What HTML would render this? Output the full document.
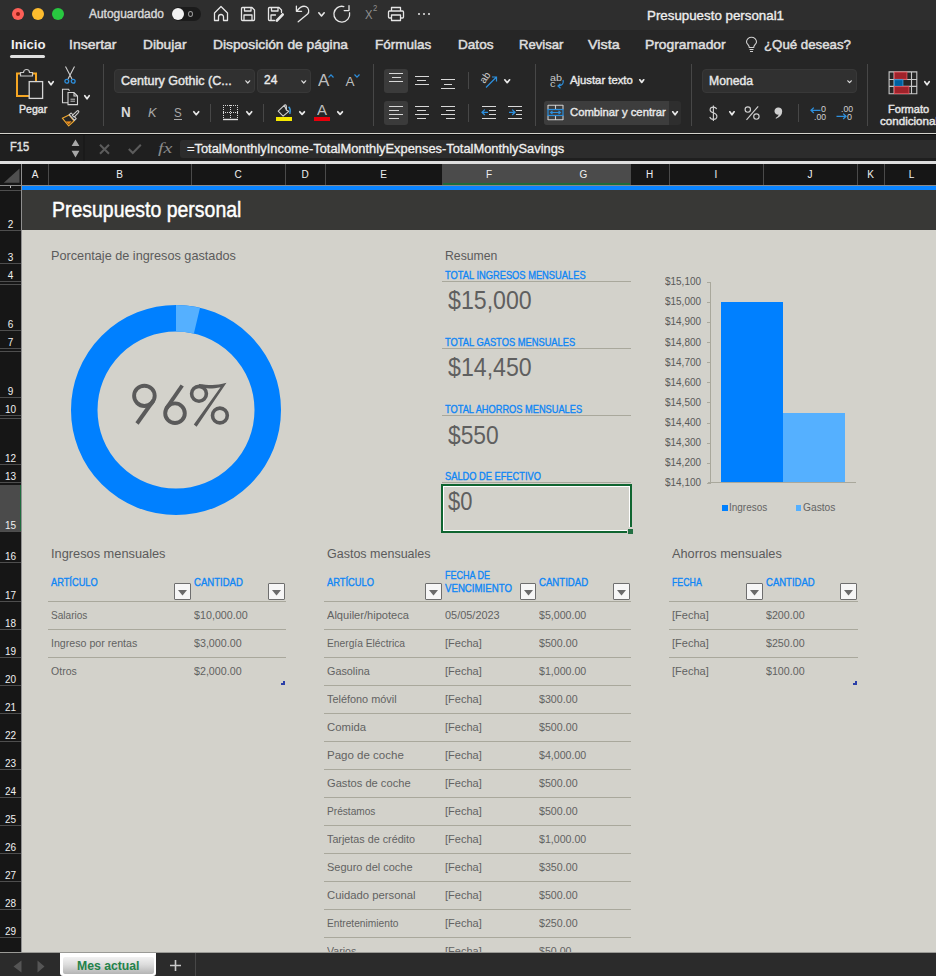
<!DOCTYPE html>
<html><head><meta charset="utf-8">
<style>
*{margin:0;padding:0;box-sizing:border-box}
html,body{width:936px;height:976px;overflow:hidden;background:#d3d2cb;font-family:"Liberation Sans",sans-serif;position:relative}
.a{position:absolute}
.t{position:absolute;white-space:nowrap;line-height:1;transform-origin:0 0}
svg{position:absolute;overflow:visible}
</style></head><body>
<div class="a" style="left:0px;top:0px;width:936px;height:30px;background:#2e2e2e;"></div>
<div class="a" style="left:0px;top:30px;width:936px;height:103px;background:#262626;"></div>
<div class="a" style="left:0px;top:133.5px;width:936px;height:1.5px;background:#0c0c0c;"></div>
<div class="a" style="left:0px;top:135px;width:936px;height:26px;background:#1f1f1f;"></div>
<div class="a" style="left:0px;top:161px;width:936px;height:3px;background:#dedede;"></div>
<div class="a" style="left:0px;top:164px;width:936px;height:21px;background:#161616;"></div>
<div class="a" style="left:0px;top:185px;width:936px;height:1px;background:#8a8a8a;"></div>
<div class="a" style="left:0px;top:186px;width:22px;height:767px;background:#161616;"></div>
<div class="a" style="left:22px;top:186px;width:914px;height:4px;background:#0a84ff;"></div>
<div class="a" style="left:22px;top:190px;width:914px;height:40px;background:#383836;"></div>
<div class="a" style="left:0px;top:953px;width:936px;height:23px;background:#2b2b2b;"></div>
<div class="a" style="left:12px;top:8px;width:12px;height:12px;border-radius:50%;background:#fe5f57"></div>
<div class="a" style="left:16px;top:12px;width:4px;height:4px;border-radius:50%;background:#8c1a11"></div>
<div class="a" style="left:32px;top:8px;width:12px;height:12px;border-radius:50%;background:#febc2e"></div>
<div class="a" style="left:52px;top:8px;width:12px;height:12px;border-radius:50%;background:#28c840"></div>
<div class="a" style="left:172px;top:7px;width:29px;height:14px;border-radius:7px;background:#1b1b1b"></div>
<div class="a" style="left:172px;top:8px;width:12px;height:12px;border-radius:50%;background:#f2f2f2"></div>
<div class="a" style="left:188px;top:11px;width:5px;height:6px;border-radius:50%;border:1px solid #9a9a9a"></div>
<svg style="left:213px;top:5px" width="16" height="17" viewBox="0 0 16 17"><path fill="none" stroke="#e6e6e6" stroke-width="1.3" stroke-linecap="round" stroke-linejoin="round" d="M1.5 8 L8 1.5 L14.5 8 V15.5 H10.5 V12 A2.5 2.5 0 0 0 5.5 12 V15.5 H1.5 Z"/></svg>
<svg style="left:240px;top:6px" width="16" height="16" viewBox="0 0 16 16"><path fill="none" stroke="#e6e6e6" stroke-width="1.3" stroke-linecap="round" stroke-linejoin="round" d="M1.5 2.5 Q1.5 1.5 2.5 1.5 H12 L14.5 4 V13.5 Q14.5 14.5 13.5 14.5 H2.5 Q1.5 14.5 1.5 13.5 Z M4.5 1.5 V5 H11 V1.5 M4 14.5 V9 H12 V14.5"/></svg>
<svg style="left:267px;top:6px" width="17" height="16" viewBox="0 0 17 16"><path fill="none" stroke="#e6e6e6" stroke-width="1.3" stroke-linecap="round" stroke-linejoin="round" d="M7.5 14.5 H2.5 Q1.5 14.5 1.5 13.5 V2.5 Q1.5 1.5 2.5 1.5 H12 L14.5 4 V6.5 M4.5 1.5 V5 H11 V1.5 M4 14.5 V9 H8.5"/><path stroke="#e6e6e6" stroke-width="2.8" stroke-linecap="round" d="M9.8 14.6 L15.6 8.6"/></svg>
<svg style="left:293px;top:4px" width="18" height="20" viewBox="0 0 18 20"><path fill="none" stroke="#e6e6e6" stroke-width="1.3" stroke-linecap="round" stroke-linejoin="round" d="M3.4 2.1 V7.35 H8.6 M4 6.8 C 6.5 3.5, 10 1.6, 13 2.6 C 16 3.8, 16.5 8, 14.6 10 L 5.2 17.8"/></svg>
<svg style="left:317.5px;top:11.8px" width="7" height="4.8" viewBox="0 0 7 4.8"><path fill="none" stroke="#e6e6e6" stroke-width="1.6" stroke-linecap="round" stroke-linejoin="round" d="M0.8 0.8 L3.5 4.0 L6.2 0.8"/></svg>
<svg style="left:332px;top:4px" width="20" height="20" viewBox="0 0 20 20"><path fill="none" stroke="#e6e6e6" stroke-width="1.3" stroke-linecap="round" stroke-linejoin="round" d="M11.84 2.52 A7.9 7.9 0 1 0 17.58 8.78 M17 1.7 V6.6 H12.2"/></svg>
<svg style="left:387px;top:6px" width="18" height="16" viewBox="0 0 18 16"><path fill="none" stroke="#e6e6e6" stroke-width="1.3" stroke-linecap="round" stroke-linejoin="round" d="M4.5 5 V1.5 H13.5 V5 M4.5 12 H2.5 Q1.5 12 1.5 11 V6 Q1.5 5 2.5 5 H15.5 Q16.5 5 16.5 6 V11 Q16.5 12 15.5 12 H13.5 M4.5 9 H13.5 V14.5 H4.5 Z"/></svg>
<div class="a" style="left:417.75px;top:12.8px;width:2.5px;height:2.5px;border-radius:50%;background:#e6e6e6"></div>
<div class="a" style="left:422.95px;top:12.8px;width:2.5px;height:2.5px;border-radius:50%;background:#e6e6e6"></div>
<div class="a" style="left:427.95px;top:12.8px;width:2.5px;height:2.5px;border-radius:50%;background:#e6e6e6"></div>
<div class="a" style="left:10px;top:55px;width:35px;height:3px;border-radius:2px;background:#e0e0e0"></div>
<svg style="left:745px;top:37px" width="13" height="16" viewBox="0 0 13 16"><path fill="none" stroke="#d0d0d0" stroke-width="1.1" d="M4.3 10.5 C4.3 8 1.5 7 1.5 4.9 A5 4.6 0 0 1 11.5 4.9 C11.5 7 8.7 8 8.7 10.5 Z M4.5 12.5 H8.5 M5 14.5 H8"/></svg>
<svg style="left:15px;top:68px" width="30" height="32" viewBox="0 0 30 32"><path fill="none" stroke="#f5a623" stroke-width="2" d="M6 5.5 H2 V28 H14"/><path fill="none" stroke="#f5a623" stroke-width="2" d="M18 5.5 H21 V13"/><path fill="#262626" stroke="#c8c8c8" stroke-width="1.2" d="M5.5 8 V4.5 H8.5 A3 3 0 0 1 14.5 4.5 H17.5 V8 Z"/><rect x="14.2" y="13.6" width="13.4" height="16.8" fill="#262626" stroke="#d4d4d4" stroke-width="1.3"/></svg>
<svg style="left:48px;top:81px" width="6" height="4.5" viewBox="0 0 6 4.5"><path fill="none" stroke="#e8e8e8" stroke-width="1.75" stroke-linecap="round" stroke-linejoin="round" d="M0.8 0.8 L3.0 3.7 L5.2 0.8"/></svg>
<svg style="left:63px;top:66px" width="14" height="18" viewBox="0 0 14 18"><path fill="none" stroke="#cfcfcf" stroke-width="1.1" d="M2.5 0.5 L9 13 M11.5 0.5 L5 13"/><circle cx="3.8" cy="15.2" r="1.9" fill="none" stroke="#2d8fdd" stroke-width="1.3"/><circle cx="10.2" cy="15.2" r="1.9" fill="none" stroke="#2d8fdd" stroke-width="1.3"/></svg>
<svg style="left:61px;top:88px" width="18" height="18" viewBox="0 0 18 18"><path fill="none" stroke="#d4d4d4" stroke-width="1.1" d="M7 14.8 H1.5 V1.3 H7.5 L8.5 2.8"/><path fill="#262626" stroke="#d4d4d4" stroke-width="1.1" d="M7 4.5 H13 L16.5 8 V16.6 H7 Z M13 4.5 V8 H16.5"/><path stroke="#d4d4d4" stroke-width="0.9" d="M9.5 11.2 H14 M9.5 13.2 H14"/></svg>
<svg style="left:84px;top:95px" width="6" height="4.5" viewBox="0 0 6 4.5"><path fill="none" stroke="#e8e8e8" stroke-width="1.75" stroke-linecap="round" stroke-linejoin="round" d="M0.8 0.8 L3.0 3.7 L5.2 0.8"/></svg>
<svg style="left:61px;top:110px" width="19" height="17" viewBox="0 0 19 17"><path fill="none" stroke="#f0a830" stroke-width="1.1" stroke-linejoin="round" d="M1.3 8.2 L8 4.9 L13 11 L7.7 15.9 Z"/><path fill="#f08c1a" d="M4.8 11.6 L10.6 11.2 L7.8 14.6 Z"/><path fill="#262626" stroke="#cfcfcf" stroke-width="1.1" stroke-linejoin="round" d="M8.2 4.6 L10.2 3 L15.2 8.5 L13.5 10.3 Z"/><path fill="#262626" stroke="#cfcfcf" stroke-width="1.1" stroke-linejoin="round" d="M11.3 5.3 L16.2 0.9 A1 1 0 0 1 17.6 2.3 L13.2 7.1 Z"/></svg>
<div class="a" style="left:103px;top:64px;width:1px;height:62px;background:#474747;"></div>
<div class="a" style="left:114px;top:69px;width:141px;height:24px;border-radius:4px;background:#303030;border:1px solid #383838"></div>
<svg style="left:244.5px;top:79.5px" width="5.5" height="3.8" viewBox="0 0 5.5 3.8"><path fill="none" stroke="#dddddd" stroke-width="1.2" stroke-linecap="round" stroke-linejoin="round" d="M0.8 0.8 L2.75 3.0 L4.7 0.8"/></svg>
<div class="a" style="left:257px;top:69px;width:54px;height:24px;border-radius:4px;background:#303030;border:1px solid #383838"></div>
<svg style="left:300.7px;top:79.5px" width="5.5" height="3.8" viewBox="0 0 5.5 3.8"><path fill="none" stroke="#dddddd" stroke-width="1.2" stroke-linecap="round" stroke-linejoin="round" d="M0.8 0.8 L2.75 3.0 L4.7 0.8"/></svg>
<svg style="left:327.5px;top:73.5px" width="6" height="4" viewBox="0 0 6 4"><path fill="none" stroke="#2d8fdd" stroke-width="1.2" d="M0.5 3.5 L3 0.8 L5.5 3.5"/></svg>
<svg style="left:353.5px;top:73.5px" width="6" height="4" viewBox="0 0 6 4"><path fill="none" stroke="#2d8fdd" stroke-width="1.2" d="M0.5 0.5 L3 3.2 L5.5 0.5"/></svg>
<div class="a" style="left:373px;top:64px;width:1px;height:62px;background:#474747;"></div>
<div class="a" style="left:174px;top:118.5px;width:8px;height:1.1px;background:#a8a8a8;"></div>
<svg style="left:192.7px;top:110.7px" width="6.5" height="4.5" viewBox="0 0 6.5 4.5"><path fill="none" stroke="#e8e8e8" stroke-width="1.75" stroke-linecap="round" stroke-linejoin="round" d="M0.8 0.8 L3.25 3.7 L5.7 0.8"/></svg>
<div class="a" style="left:210px;top:104px;width:1px;height:18px;background:#474747;"></div>
<svg style="left:222px;top:104px" width="17" height="17" viewBox="0 0 17 17"><path fill="none" stroke="#d8d8d8" stroke-width="1" stroke-dasharray="1 1" d="M1 1.5 H16 M1.5 1 V15 M15.5 1 V15 M8.5 1 V15 M1 8.5 H16"/><path stroke="#e0e0e0" stroke-width="1.4" d="M1 15.5 H16"/></svg>
<svg style="left:245.7px;top:110.7px" width="6.5" height="4.5" viewBox="0 0 6.5 4.5"><path fill="none" stroke="#e8e8e8" stroke-width="1.75" stroke-linecap="round" stroke-linejoin="round" d="M0.8 0.8 L3.25 3.7 L5.7 0.8"/></svg>
<div class="a" style="left:263px;top:104px;width:1px;height:18px;background:#474747;"></div>
<svg style="left:277px;top:104px" width="15" height="13" viewBox="0 0 15 13"><path fill="none" stroke="#cfcfcf" stroke-width="1.1" stroke-linejoin="round" d="M1.2 7.2 L7.2 1.3 Q8.8 0.2 9.3 1.8 L9.6 6.3 L11.8 7.3 L6.1 12.2 Z M7.2 1.3 L9.5 6.2"/><path fill="none" stroke="#3c9be0" stroke-width="1.5" d="M11.6 2.8 Q14 4.5 12.8 9.8"/></svg>
<div class="a" style="left:275.7px;top:116.7px;width:16.4px;height:4.3px;background:#f5e800;"></div>
<svg style="left:298.8px;top:111px" width="6.2" height="4.2" viewBox="0 0 6.2 4.2"><path fill="none" stroke="#e8e8e8" stroke-width="1.75" stroke-linecap="round" stroke-linejoin="round" d="M0.8 0.8 L3.1 3.4000000000000004 L5.4 0.8"/></svg>
<div class="a" style="left:313.7px;top:116.7px;width:16.3px;height:4.3px;background:#e8000b;"></div>
<svg style="left:336.7px;top:111px" width="6.2" height="4.2" viewBox="0 0 6.2 4.2"><path fill="none" stroke="#e8e8e8" stroke-width="1.75" stroke-linecap="round" stroke-linejoin="round" d="M0.8 0.8 L3.1 3.4000000000000004 L5.4 0.8"/></svg>
<div class="a" style="left:384px;top:69px;width:24px;height:24px;border-radius:3px;background:#3b3b3b"></div>
<div class="a" style="left:384px;top:101px;width:24px;height:24px;border-radius:3px;background:#3b3b3b"></div>
<div class="a" style="left:389px;top:73px;width:14px;height:1.3px;background:#d8d8d8;"></div>
<div class="a" style="left:391.5px;top:77px;width:9.300000000000011px;height:1.3px;background:#d8d8d8;"></div>
<div class="a" style="left:389px;top:81px;width:14px;height:1.3px;background:#d8d8d8;"></div>
<div class="a" style="left:415px;top:76px;width:14px;height:1.3px;background:#d8d8d8;"></div>
<div class="a" style="left:417.4px;top:80px;width:9.0px;height:1.3px;background:#d8d8d8;"></div>
<div class="a" style="left:415px;top:84px;width:14px;height:1.3px;background:#d8d8d8;"></div>
<div class="a" style="left:441px;top:79px;width:14px;height:1.3px;background:#d8d8d8;"></div>
<div class="a" style="left:443.7px;top:84px;width:8.699999999999989px;height:1.3px;background:#d8d8d8;"></div>
<div class="a" style="left:441px;top:88px;width:14px;height:1.3px;background:#d8d8d8;"></div>
<div class="a" style="left:389px;top:106px;width:14px;height:1.3px;background:#d8d8d8;"></div>
<div class="a" style="left:389px;top:110px;width:9.800000000000011px;height:1.3px;background:#d8d8d8;"></div>
<div class="a" style="left:389px;top:114px;width:14px;height:1.3px;background:#d8d8d8;"></div>
<div class="a" style="left:389px;top:118px;width:9.800000000000011px;height:1.3px;background:#d8d8d8;"></div>
<div class="a" style="left:415px;top:106px;width:14px;height:1.3px;background:#d8d8d8;"></div>
<div class="a" style="left:417.4px;top:110px;width:9.0px;height:1.3px;background:#d8d8d8;"></div>
<div class="a" style="left:415px;top:114px;width:14px;height:1.3px;background:#d8d8d8;"></div>
<div class="a" style="left:417.4px;top:118px;width:9.0px;height:1.3px;background:#d8d8d8;"></div>
<div class="a" style="left:441px;top:106px;width:14px;height:1.3px;background:#d8d8d8;"></div>
<div class="a" style="left:445.5px;top:110px;width:9.5px;height:1.3px;background:#d8d8d8;"></div>
<div class="a" style="left:441px;top:114px;width:14px;height:1.3px;background:#d8d8d8;"></div>
<div class="a" style="left:445.5px;top:118px;width:9.5px;height:1.3px;background:#d8d8d8;"></div>
<div class="a" style="left:468px;top:72px;width:1px;height:17px;background:#474747;"></div>
<div class="a" style="left:468px;top:104px;width:1px;height:18px;background:#474747;"></div>
<svg style="left:479px;top:71px" width="20" height="18" viewBox="0 0 20 18"><text x="0" y="0" transform="translate(5.5 13) rotate(-55)" font-family="Liberation Sans" font-size="10" fill="#cfcfcf">ab</text><path fill="none" stroke="#2d8fdd" stroke-width="1.2" d="M7 16.5 L17.5 6 M13 6 H17.5 V10.5"/></svg>
<svg style="left:504px;top:79px" width="6.4" height="4.5" viewBox="0 0 6.4 4.5"><path fill="none" stroke="#e8e8e8" stroke-width="1.75" stroke-linecap="round" stroke-linejoin="round" d="M0.8 0.8 L3.2 3.7 L5.6000000000000005 0.8"/></svg>
<div class="a" style="left:482px;top:106px;width:14px;height:1.3px;background:#d8d8d8;"></div>
<div class="a" style="left:488.7px;top:110px;width:7.300000000000011px;height:1.3px;background:#d8d8d8;"></div>
<div class="a" style="left:488.7px;top:114px;width:7.300000000000011px;height:1.3px;background:#d8d8d8;"></div>
<div class="a" style="left:482px;top:118px;width:14px;height:1.3px;background:#d8d8d8;"></div>
<svg style="left:481px;top:109px" width="8" height="7" viewBox="0 0 8 7"><path fill="none" stroke="#2d8fdd" stroke-width="1.3" d="M7 3.3 H1 M3.8 0.6 L1 3.3 L3.8 6"/></svg>
<div class="a" style="left:508px;top:106px;width:14px;height:1.3px;background:#d8d8d8;"></div>
<div class="a" style="left:516px;top:110px;width:6px;height:1.3px;background:#d8d8d8;"></div>
<div class="a" style="left:516px;top:114px;width:6px;height:1.3px;background:#d8d8d8;"></div>
<div class="a" style="left:508px;top:118px;width:14px;height:1.3px;background:#d8d8d8;"></div>
<svg style="left:507.5px;top:109px" width="8" height="7" viewBox="0 0 8 7"><path fill="none" stroke="#2d8fdd" stroke-width="1.3" d="M1 3.3 H7 M4.2 0.6 L7 3.3 L4.2 6"/></svg>
<div class="a" style="left:535px;top:64px;width:1px;height:62px;background:#474747;"></div>
<svg style="left:555px;top:79px" width="10" height="10" viewBox="0 0 10 10"><path fill="none" stroke="#2d8fdd" stroke-width="1.2" d="M8 1 Q9.5 6 3.5 7 M5.5 4.8 L3 7 L5.5 9.2"/></svg>
<svg style="left:639.1px;top:79.3px" width="5.5" height="4.2" viewBox="0 0 5.5 4.2"><path fill="none" stroke="#e8e8e8" stroke-width="1.75" stroke-linecap="round" stroke-linejoin="round" d="M0.8 0.8 L2.75 3.4000000000000004 L4.7 0.8"/></svg>
<div class="a" style="left:544px;top:101px;width:137px;height:24px;border-radius:3px;background:#2e2e2e"></div>
<div class="a" style="left:544px;top:101px;width:125px;height:24px;border-radius:3px 0 0 3px;background:#3d3d3d"></div>
<svg style="left:547px;top:104px" width="17" height="17" viewBox="0 0 17 17"><path fill="none" stroke="#cfcfcf" stroke-width="1.1" d="M1 1.3 H16 M1 15.7 H16 M1 1 V5.5 M16 1 V5.5 M1 11.5 V16 M16 11.5 V16 M8.5 1 V5.5 M8.5 11.5 V16"/><rect x="1" y="5.5" width="15" height="6" fill="none" stroke="#2d8fdd" stroke-width="1.2"/><path fill="none" stroke="#2d8fdd" stroke-width="1.1" d="M3.5 8.5 H13.5 M5.5 7 L3.5 8.5 L5.5 10 M11.5 7 L13.5 8.5 L11.5 10"/></svg>
<svg style="left:672px;top:111.2px" width="6.1" height="4.6" viewBox="0 0 6.1 4.6"><path fill="none" stroke="#e8e8e8" stroke-width="1.75" stroke-linecap="round" stroke-linejoin="round" d="M0.8 0.8 L3.05 3.8 L5.3 0.8"/></svg>
<div class="a" style="left:691px;top:64px;width:1px;height:62px;background:#474747;"></div>
<div class="a" style="left:702px;top:69px;width:155px;height:24px;border-radius:4px;background:#303030;border:1px solid #383838"></div>
<svg style="left:847.1px;top:79.6px" width="5.1" height="3.4" viewBox="0 0 5.1 3.4"><path fill="none" stroke="#dddddd" stroke-width="1.2" stroke-linecap="round" stroke-linejoin="round" d="M0.8 0.8 L2.55 2.5999999999999996 L4.3 0.8"/></svg>
<svg style="left:700px;top:100px" width="70" height="24" viewBox="700 100 70 24"><g fill="none" stroke="#cfcfcf" stroke-width="1.15"><path d="M716.6 109.2 C716.2 107.6, 714.8 107.1, 713.4 107.1 C711.4 107.1, 710.1 108.2, 710.1 109.9 C710.1 113.3, 716.9 112.3, 716.9 116.2 C716.9 118.2, 715.4 119.3, 713.4 119.3 C711.6 119.3, 710.2 118.5, 709.8 116.8"/><path d="M713.4 105.5 V121"/><circle cx="747.8" cy="109.5" r="2.7"/><circle cx="756.4" cy="116.5" r="2.7"/><path d="M758.2 106.3 L746.5 119.9"/></g></svg>
<svg style="left:729px;top:111px" width="5.9" height="4.6" viewBox="0 0 5.9 4.6"><path fill="none" stroke="#e8e8e8" stroke-width="1.75" stroke-linecap="round" stroke-linejoin="round" d="M0.8 0.8 L2.95 3.8 L5.1000000000000005 0.8"/></svg>
<svg style="left:774px;top:107px" width="9" height="12" viewBox="0 0 9 12"><path fill="#cfcfcf" d="M4.5 0.5 A3.6 3.6 0 0 1 8.2 4.2 Q8.2 9 2 11.8 L1.6 11 Q4.5 9.2 4.8 7.6 A3.6 3.6 0 1 1 4.5 0.5 Z"/></svg>
<div class="a" style="left:798px;top:104px;width:1px;height:18px;background:#474747;"></div>
<svg style="left:810px;top:106.5px" width="11" height="7" viewBox="0 0 11 7"><path fill="none" stroke="#2d8fdd" stroke-width="1.3" d="M10.5 3.3 H1 M3.8 0.6 L1 3.3 L3.8 6"/></svg>
<svg style="left:836px;top:113.2px" width="11" height="7" viewBox="0 0 11 7"><path fill="none" stroke="#2d8fdd" stroke-width="1.3" d="M0.5 3.3 H10 M7.2 0.6 L10 3.3 L7.2 6"/></svg>
<div class="a" style="left:867px;top:64px;width:1px;height:62px;background:#474747;"></div>
<svg style="left:888px;top:71px" width="30" height="24" viewBox="0 0 30 24"><path fill="none" stroke="#c8c8c8" stroke-width="1.1" d="M1.1 0.9 H28.8 V22.8 H1.1 Z M1.1 8.5 H28.8 M1.1 15.4 H28.8 M6.1 0.9 V22.8 M23.5 0.9 V22.8"/><rect x="6.3" y="1.1" width="12.6" height="7.2" fill="#a0222a" stroke="#e0505a" stroke-width="0.9"/><rect x="6.3" y="8.7" width="8.6" height="6.6" fill="#0060a0" stroke="#3a9ad9" stroke-width="0.9"/><rect x="6.3" y="15.6" width="14.6" height="7.0" fill="#a0222a" stroke="#e0505a" stroke-width="0.9"/></svg>
<svg style="left:924px;top:81px" width="6" height="4.5" viewBox="0 0 6 4.5"><path fill="none" stroke="#e8e8e8" stroke-width="1.75" stroke-linecap="round" stroke-linejoin="round" d="M0.8 0.8 L3.0 3.7 L5.2 0.8"/></svg>
<svg style="left:71px;top:139px" width="9" height="19" viewBox="0 0 9 19"><path fill="#a8a8a8" d="M0.6 7 L4.5 0.6 L8.4 7 Z M0.6 11.7 L8.4 11.7 L4.5 18.6 Z"/></svg>
<div class="a" style="left:83px;top:135px;width:1.5px;height:26px;background:#1a1a1a;"></div>
<svg style="left:99px;top:143.5px" width="11" height="10.5" viewBox="0 0 11 10.5"><path fill="none" stroke="#5c5c5c" stroke-width="2" d="M1 0.8 L10 9.7 M10 0.8 L1 9.7"/></svg>
<svg style="left:127.5px;top:144px" width="13.5" height="10" viewBox="0 0 13.5 10"><path fill="none" stroke="#5c5c5c" stroke-width="2" d="M0.8 5 L4.8 9 L12.8 0.8"/></svg>
<div class="a" style="left:180px;top:139.5px;width:760px;height:18.5px;border-radius:3px;background:#2c2c2c"></div>
<svg style="left:3px;top:168px" width="17" height="15" viewBox="0 0 17 15"><path fill="#4f4f4f" d="M16.5 0.5 V14.8 H0.8 Z"/></svg>
<div class="a" style="left:21px;top:164px;width:1px;height:22px;background:#8f8f8f;"></div>
<div class="a" style="left:442px;top:164px;width:188px;height:21px;background:#4b4b4b;"></div>
<div class="a" style="left:442px;top:183px;width:188px;height:2px;background:#1d6b3c;"></div>
<div class="a" style="left:48px;top:164px;width:1px;height:21px;background:#4a4a4a;"></div>
<div class="a" style="left:191px;top:164px;width:1px;height:21px;background:#4a4a4a;"></div>
<div class="a" style="left:285px;top:164px;width:1px;height:21px;background:#4a4a4a;"></div>
<div class="a" style="left:325px;top:164px;width:1px;height:21px;background:#4a4a4a;"></div>
<div class="a" style="left:442px;top:164px;width:1px;height:21px;background:#4a4a4a;"></div>
<div class="a" style="left:630px;top:164px;width:1px;height:21px;background:#4a4a4a;"></div>
<div class="a" style="left:669px;top:164px;width:1px;height:21px;background:#4a4a4a;"></div>
<div class="a" style="left:763px;top:164px;width:1px;height:21px;background:#4a4a4a;"></div>
<div class="a" style="left:857px;top:164px;width:1px;height:21px;background:#4a4a4a;"></div>
<div class="a" style="left:884px;top:164px;width:1px;height:21px;background:#4a4a4a;"></div>
<div class="a" style="left:0px;top:189.5px;width:21px;height:1px;background:#4e4e4e;"></div>
<div class="a" style="left:0px;top:229.5px;width:21px;height:1px;background:#4e4e4e;"></div>
<div class="a" style="left:0px;top:262.5px;width:21px;height:1px;background:#4e4e4e;"></div>
<div class="a" style="left:0px;top:280.5px;width:21px;height:1px;background:#4e4e4e;"></div>
<div class="a" style="left:0px;top:283.5px;width:21px;height:1px;background:#4e4e4e;"></div>
<div class="a" style="left:0px;top:330.0px;width:21px;height:1px;background:#4e4e4e;"></div>
<div class="a" style="left:0px;top:347.5px;width:21px;height:1px;background:#4e4e4e;"></div>
<div class="a" style="left:0px;top:350.5px;width:21px;height:1px;background:#4e4e4e;"></div>
<div class="a" style="left:0px;top:396.5px;width:21px;height:1px;background:#4e4e4e;"></div>
<div class="a" style="left:0px;top:414.5px;width:21px;height:1px;background:#4e4e4e;"></div>
<div class="a" style="left:0px;top:417.5px;width:21px;height:1px;background:#4e4e4e;"></div>
<div class="a" style="left:0px;top:463.5px;width:21px;height:1px;background:#4e4e4e;"></div>
<div class="a" style="left:0px;top:481.5px;width:21px;height:1px;background:#4e4e4e;"></div>
<div class="a" style="left:0px;top:484.5px;width:21px;height:1px;background:#4e4e4e;"></div>
<div class="a" style="left:0px;top:485px;width:21px;height:46px;background:#4b4b4b;"></div>
<div class="a" style="left:20px;top:485px;width:1.5px;height:46px;background:#1d6b3c;"></div>
<div class="a" style="left:0px;top:530.5px;width:21px;height:1px;background:#4e4e4e;"></div>
<div class="a" style="left:0px;top:561.5px;width:21px;height:1px;background:#4e4e4e;"></div>
<div class="a" style="left:0px;top:600.5px;width:21px;height:1px;background:#4e4e4e;"></div>
<div class="a" style="left:0px;top:628.5px;width:21px;height:1px;background:#4e4e4e;"></div>
<div class="a" style="left:0px;top:656.5px;width:21px;height:1px;background:#4e4e4e;"></div>
<div class="a" style="left:0px;top:684.5px;width:21px;height:1px;background:#4e4e4e;"></div>
<div class="a" style="left:0px;top:712.5px;width:21px;height:1px;background:#4e4e4e;"></div>
<div class="a" style="left:0px;top:740.5px;width:21px;height:1px;background:#4e4e4e;"></div>
<div class="a" style="left:0px;top:768.5px;width:21px;height:1px;background:#4e4e4e;"></div>
<div class="a" style="left:0px;top:796.5px;width:21px;height:1px;background:#4e4e4e;"></div>
<div class="a" style="left:0px;top:824.5px;width:21px;height:1px;background:#4e4e4e;"></div>
<div class="a" style="left:0px;top:852.5px;width:21px;height:1px;background:#4e4e4e;"></div>
<div class="a" style="left:0px;top:880.5px;width:21px;height:1px;background:#4e4e4e;"></div>
<div class="a" style="left:0px;top:908.5px;width:21px;height:1px;background:#4e4e4e;"></div>
<div class="a" style="left:0px;top:936.5px;width:21px;height:1px;background:#4e4e4e;"></div>
<div class="a" style="left:21px;top:164px;width:1px;height:789px;background:#8f8f8f;"></div>
<svg style="left:71px;top:304.5px" width="210" height="210" viewBox="0 0 210 210"><circle cx="105" cy="105" r="91.75" fill="none" stroke="#0080ff" stroke-width="26.5"/><path fill="#55b0ff" d="M105 0 A105 105 0 0 1 129 2.8 L122.9 28.6 A78.5 78.5 0 0 0 105 26.5 Z"/></svg>
<svg style="left:0px;top:0px" width="936" height="976" viewBox="0 0 936 976"><g fill="none" stroke="#5a5a5a" stroke-width="3.9"><ellipse cx="144.4" cy="395.85" rx="10.3" ry="10.1"/><path d="M153.4 400.5 L137 423.5"/><ellipse cx="175" cy="413.2" rx="9.8" ry="9.8"/><path d="M166.2 408.6 L182.2 385.5"/><circle cx="199" cy="393.8" r="7.4" stroke-width="3.6"/><circle cx="219.9" cy="415.5" r="7.4" stroke-width="3.6"/></g><path fill="#5a5a5a" d="M199 383.9 C 207 384.5, 214 386.5, 226.5 382.8 L 196.6 426.8 L 193.8 424.5 L 220.5 387.2 C 212 389.2, 205 388.4, 199 387.6 Z"/></svg>
<div class="a" style="left:442px;top:280.6px;width:189px;height:1px;background:#a9a89c;"></div>
<div class="a" style="left:442px;top:347.6px;width:189px;height:1px;background:#a9a89c;"></div>
<div class="a" style="left:442px;top:414.5px;width:189px;height:1px;background:#a9a89c;"></div>
<div class="a" style="left:442px;top:481.9px;width:189px;height:1px;background:#a9a89c;"></div>
<div class="a" style="left:441px;top:484px;width:191px;height:49px;border:2px solid #0f6530;box-shadow:inset 0 0 0 1px #ffffff"></div>
<div class="a" style="left:626.5px;top:527.3px;width:8px;height:8px;background:#d3d2cb;"></div>
<div class="a" style="left:628px;top:528.7px;width:5.2px;height:5.2px;background:#237043;"></div>
<div class="a" style="left:706.8px;top:282.1px;width:4px;height:1px;background:#a9a89c;"></div>
<div class="a" style="left:706.8px;top:302.16px;width:4px;height:1px;background:#a9a89c;"></div>
<div class="a" style="left:706.8px;top:322.22px;width:4px;height:1px;background:#a9a89c;"></div>
<div class="a" style="left:706.8px;top:342.28000000000003px;width:4px;height:1px;background:#a9a89c;"></div>
<div class="a" style="left:706.8px;top:362.34000000000003px;width:4px;height:1px;background:#a9a89c;"></div>
<div class="a" style="left:706.8px;top:382.40000000000003px;width:4px;height:1px;background:#a9a89c;"></div>
<div class="a" style="left:706.8px;top:402.46000000000004px;width:4px;height:1px;background:#a9a89c;"></div>
<div class="a" style="left:706.8px;top:422.52px;width:4px;height:1px;background:#a9a89c;"></div>
<div class="a" style="left:706.8px;top:442.58000000000004px;width:4px;height:1px;background:#a9a89c;"></div>
<div class="a" style="left:706.8px;top:462.64px;width:4px;height:1px;background:#a9a89c;"></div>
<div class="a" style="left:706.8px;top:482.70000000000005px;width:4px;height:1px;background:#a9a89c;"></div>
<div class="a" style="left:709.8px;top:282.1px;width:1px;height:200.6px;background:#a9a89c;"></div>
<div class="a" style="left:707.5px;top:482px;width:148px;height:1px;background:#a9a89c;"></div>
<div class="a" style="left:721.1px;top:302px;width:61.8px;height:180px;background:#0080ff;"></div>
<div class="a" style="left:782.9px;top:412.8px;width:62.2px;height:69.2px;background:#55b0ff;"></div>
<div class="a" style="left:722px;top:504.7px;width:5.5px;height:6.3px;background:#0080ff;"></div>
<div class="a" style="left:796.2px;top:504.7px;width:5.2px;height:6.3px;background:#55b0ff;"></div>
<div class="a" style="left:174.2px;top:583.1px;width:16.6px;height:16.7px;background:#f6f6f6;border:1px solid #6e6e6e;border-radius:1px"></div>
<svg style="left:178.2px;top:589.6px" width="9" height="5.5" viewBox="0 0 9 5.5"><path fill="#6a6a6a" d="M0 0 H9 L4.5 5.5 Z"/></svg>
<div class="a" style="left:268.3px;top:583.1px;width:16.6px;height:16.7px;background:#f6f6f6;border:1px solid #6e6e6e;border-radius:1px"></div>
<svg style="left:272.3px;top:589.6px" width="9" height="5.5" viewBox="0 0 9 5.5"><path fill="#6a6a6a" d="M0 0 H9 L4.5 5.5 Z"/></svg>
<div class="a" style="left:47.7px;top:600.7px;width:238.10000000000002px;height:1px;background:#a9a89c;"></div>
<div class="a" style="left:47.7px;top:628.9px;width:238.10000000000002px;height:1px;background:#a9a89c;"></div>
<div class="a" style="left:47.7px;top:656.9px;width:238.10000000000002px;height:1px;background:#a9a89c;"></div>
<div class="a" style="left:281px;top:681px;width:3.5px;height:3.5px;background:#2b3fa8;"></div>
<div class="a" style="left:281px;top:681px;width:2px;height:2px;background:#d3d2cb;"></div>
<div class="a" style="left:425.1px;top:583.3px;width:16.6px;height:16.7px;background:#f6f6f6;border:1px solid #6e6e6e;border-radius:1px"></div>
<svg style="left:429.1px;top:589.8px" width="9" height="5.5" viewBox="0 0 9 5.5"><path fill="#6a6a6a" d="M0 0 H9 L4.5 5.5 Z"/></svg>
<div class="a" style="left:519.6px;top:583.3px;width:16.6px;height:16.7px;background:#f6f6f6;border:1px solid #6e6e6e;border-radius:1px"></div>
<svg style="left:523.6px;top:589.8px" width="9" height="5.5" viewBox="0 0 9 5.5"><path fill="#6a6a6a" d="M0 0 H9 L4.5 5.5 Z"/></svg>
<div class="a" style="left:613.3px;top:583.3px;width:16.6px;height:16.7px;background:#f6f6f6;border:1px solid #6e6e6e;border-radius:1px"></div>
<svg style="left:617.3px;top:589.8px" width="9" height="5.5" viewBox="0 0 9 5.5"><path fill="#6a6a6a" d="M0 0 H9 L4.5 5.5 Z"/></svg>
<div class="a" style="left:323.8px;top:600.7px;width:306.90000000000003px;height:1px;background:#a9a89c;"></div>
<div class="a" style="left:323.8px;top:628.9px;width:306.90000000000003px;height:1px;background:#a9a89c;"></div>
<div class="a" style="left:323.8px;top:656.9px;width:306.90000000000003px;height:1px;background:#a9a89c;"></div>
<div class="a" style="left:323.8px;top:684.9px;width:306.90000000000003px;height:1px;background:#a9a89c;"></div>
<div class="a" style="left:323.8px;top:712.9px;width:306.90000000000003px;height:1px;background:#a9a89c;"></div>
<div class="a" style="left:323.8px;top:740.9px;width:306.90000000000003px;height:1px;background:#a9a89c;"></div>
<div class="a" style="left:323.8px;top:768.9px;width:306.90000000000003px;height:1px;background:#a9a89c;"></div>
<div class="a" style="left:323.8px;top:796.9px;width:306.90000000000003px;height:1px;background:#a9a89c;"></div>
<div class="a" style="left:323.8px;top:824.9px;width:306.90000000000003px;height:1px;background:#a9a89c;"></div>
<div class="a" style="left:323.8px;top:852.9px;width:306.90000000000003px;height:1px;background:#a9a89c;"></div>
<div class="a" style="left:323.8px;top:880.9px;width:306.90000000000003px;height:1px;background:#a9a89c;"></div>
<div class="a" style="left:323.8px;top:908.9px;width:306.90000000000003px;height:1px;background:#a9a89c;"></div>
<div class="a" style="left:323.8px;top:936.9px;width:306.90000000000003px;height:1px;background:#a9a89c;"></div>
<div class="a" style="left:323.8px;top:964.9px;width:306.90000000000003px;height:1px;background:#a9a89c;"></div>
<div class="a" style="left:746.4px;top:583.3px;width:16.6px;height:16.7px;background:#f6f6f6;border:1px solid #6e6e6e;border-radius:1px"></div>
<svg style="left:750.4px;top:589.8px" width="9" height="5.5" viewBox="0 0 9 5.5"><path fill="#6a6a6a" d="M0 0 H9 L4.5 5.5 Z"/></svg>
<div class="a" style="left:840px;top:583.3px;width:16.6px;height:16.7px;background:#f6f6f6;border:1px solid #6e6e6e;border-radius:1px"></div>
<svg style="left:844px;top:589.8px" width="9" height="5.5" viewBox="0 0 9 5.5"><path fill="#6a6a6a" d="M0 0 H9 L4.5 5.5 Z"/></svg>
<div class="a" style="left:669.1px;top:600.7px;width:188.5px;height:1px;background:#a9a89c;"></div>
<div class="a" style="left:669.1px;top:628.9px;width:188.5px;height:1px;background:#a9a89c;"></div>
<div class="a" style="left:669.1px;top:656.9px;width:188.5px;height:1px;background:#a9a89c;"></div>
<div class="a" style="left:853px;top:681px;width:3.5px;height:3.5px;background:#2b3fa8;"></div>
<div class="a" style="left:853px;top:681px;width:2px;height:2px;background:#d3d2cb;"></div>
<div class="a" style="left:0px;top:952px;width:936px;height:1px;background:#9a9a96;z-index:3"></div>
<div class="a" style="left:0px;top:953px;width:936px;height:23px;background:#2b2b2b;z-index:3"></div>
<svg style="z-index:4;left:13px;top:960px" width="9" height="13" viewBox="0 0 9 13"><path fill="#555" d="M8.5 0.5 V12.5 L0.5 6.5 Z"/></svg>
<svg style="z-index:4;left:37px;top:960px" width="8" height="13" viewBox="0 0 8 13"><path fill="#555" d="M0.5 0.5 V12.5 L7.5 6.5 Z"/></svg>
<div class="a" style="z-index:4;left:60px;top:953px;width:96px;height:23px;background:#ffffff;border-radius:0 0 3px 3px"></div>
<div class="a" style="z-index:4;left:62.5px;top:957px;width:91px;height:16.5px;background:linear-gradient(#f2f2f2,#dcdcdc 45%,#b4b4b4);border-radius:2px"></div>
<svg style="z-index:4;left:170px;top:960px" width="11" height="11" viewBox="0 0 11 11"><path stroke="#c8c8c8" stroke-width="1.6" d="M5.5 0 V11 M0 5.5 H11"/></svg>
<div class="a" style="left:194.5px;top:953px;width:1px;height:23px;background:#474747;z-index:4"></div>
<div class="a" style="left:9.6px;top:186px;width:1.2px;height:2.2px;background:#b8b8b8;"></div>
<span class="t" style="left:89px;top:7.84px;font-size:12px;color:#d8d8d8;font-weight:400;font-family:'Liberation Sans',sans-serif;transform:scaleX(0.9946);-webkit-text-stroke:0.4px currentColor;">Autoguardado</span>
<span class="t" style="left:365.3px;top:7.57px;font-size:13.5px;color:#8e8e8e;font-weight:400;font-family:'Liberation Sans',sans-serif;transform:scaleX(0.8319);">X</span>
<span class="t" style="left:373.4px;top:3.74px;font-size:8.7px;color:#8e8e8e;font-weight:400;font-family:'Liberation Sans',sans-serif;transform:scaleX(0.8877);">2</span>
<span class="t" style="left:647px;top:8.50px;font-size:13px;color:#ededed;font-weight:400;font-family:'Liberation Sans',sans-serif;transform:scaleX(1.0247);-webkit-text-stroke:0.35px currentColor;">Presupuesto personal1</span>
<span class="t" style="left:10.5px;top:38.00px;font-size:13px;color:#f0f0f0;font-weight:700;font-family:'Liberation Sans',sans-serif;transform:scaleX(1.0161);">Inicio</span>
<span class="t" style="left:68.5px;top:38.00px;font-size:13px;color:#dedede;font-weight:400;font-family:'Liberation Sans',sans-serif;transform:scaleX(1.0776);-webkit-text-stroke:0.5px currentColor;">Insertar</span>
<span class="t" style="left:142.7px;top:38.00px;font-size:13px;color:#dedede;font-weight:400;font-family:'Liberation Sans',sans-serif;transform:scaleX(1.0561);-webkit-text-stroke:0.5px currentColor;">Dibujar</span>
<span class="t" style="left:213px;top:38.00px;font-size:13px;color:#dedede;font-weight:400;font-family:'Liberation Sans',sans-serif;transform:scaleX(1.0613);-webkit-text-stroke:0.5px currentColor;">Disposición de página</span>
<span class="t" style="left:375.4px;top:38.00px;font-size:13px;color:#dedede;font-weight:400;font-family:'Liberation Sans',sans-serif;transform:scaleX(1.0390);-webkit-text-stroke:0.5px currentColor;">Fórmulas</span>
<span class="t" style="left:457.5px;top:38.00px;font-size:13px;color:#dedede;font-weight:400;font-family:'Liberation Sans',sans-serif;transform:scaleX(1.0451);-webkit-text-stroke:0.5px currentColor;">Datos</span>
<span class="t" style="left:518.6px;top:38.00px;font-size:13px;color:#dedede;font-weight:400;font-family:'Liberation Sans',sans-serif;transform:scaleX(1.0073);-webkit-text-stroke:0.5px currentColor;">Revisar</span>
<span class="t" style="left:587.7px;top:38.00px;font-size:13px;color:#dedede;font-weight:400;font-family:'Liberation Sans',sans-serif;transform:scaleX(1.1056);-webkit-text-stroke:0.5px currentColor;">Vista</span>
<span class="t" style="left:644.7px;top:38.00px;font-size:13px;color:#dedede;font-weight:400;font-family:'Liberation Sans',sans-serif;transform:scaleX(1.0623);-webkit-text-stroke:0.5px currentColor;">Programador</span>
<span class="t" style="left:764px;top:38.00px;font-size:13px;color:#dedede;font-weight:400;font-family:'Liberation Sans',sans-serif;transform:scaleX(1.0202);-webkit-text-stroke:0.5px currentColor;">¿Qué deseas?</span>
<span class="t" style="left:18.5px;top:104.29px;font-size:11px;color:#e6e6e6;font-weight:400;font-family:'Liberation Sans',sans-serif;transform:scaleX(0.9605);-webkit-text-stroke:0.4px currentColor;">Pegar</span>
<span class="t" style="left:120.7px;top:74.64px;font-size:12px;color:#e8e8e8;font-weight:400;font-family:'Liberation Sans',sans-serif;transform:scaleX(1.0440);-webkit-text-stroke:0.4px currentColor;">Century Gothic (C...</span>
<span class="t" style="left:263.7px;top:74.42px;font-size:12.5px;color:#ececec;font-weight:400;font-family:'Liberation Sans',sans-serif;transform:scaleX(0.9564);-webkit-text-stroke:0.4px currentColor;">24</span>
<span class="t" style="left:317.8px;top:71.61px;font-size:17px;color:#bdbdbd;font-weight:400;font-family:'Liberation Sans',sans-serif;transform:scaleX(0.9961);">A</span>
<span class="t" style="left:345.5px;top:74.57px;font-size:13.5px;color:#bdbdbd;font-weight:400;font-family:'Liberation Sans',sans-serif;">A</span>
<span class="t" style="left:120.7px;top:105.35px;font-size:14px;color:#d8d8d8;font-weight:700;font-family:'Liberation Sans',sans-serif;transform:scaleX(0.9580);">N</span>
<span class="t" style="left:147.8px;top:105.77px;font-size:13.5px;color:#a8a8a8;font-weight:400;font-family:'Liberation Sans',sans-serif;transform:scaleX(0.9539);font-style:italic;">K</span>
<span class="t" style="left:174.2px;top:106.00px;font-size:13px;color:#a8a8a8;font-weight:400;font-family:'Liberation Sans',sans-serif;transform:scaleX(0.8879);">S</span>
<span class="t" style="left:317px;top:103.23px;font-size:14.5px;color:#bdbdbd;font-weight:400;font-family:'Liberation Sans',sans-serif;transform:scaleX(1.0339);">A</span>
<span class="t" style="left:550.3px;top:73.68px;font-size:9px;color:#c8c8c8;font-weight:400;font-family:'Liberation Sans',sans-serif;transform:scaleX(1.1981);">ab</span>
<span class="t" style="left:550.3px;top:79.98px;font-size:9px;color:#c8c8c8;font-weight:400;font-family:'Liberation Sans',sans-serif;transform:scaleX(1.2222);">c</span>
<span class="t" style="left:570.4px;top:75.37px;font-size:11.5px;color:#e8e8e8;font-weight:400;font-family:'Liberation Sans',sans-serif;transform:scaleX(0.9824);-webkit-text-stroke:0.4px currentColor;">Ajustar texto</span>
<span class="t" style="left:570.4px;top:107.27px;font-size:11.5px;color:#e8e8e8;font-weight:400;font-family:'Liberation Sans',sans-serif;transform:scaleX(0.9796);-webkit-text-stroke:0.4px currentColor;">Combinar y centrar</span>
<span class="t" style="left:708.7px;top:74.84px;font-size:12px;color:#e8e8e8;font-weight:400;font-family:'Liberation Sans',sans-serif;transform:scaleX(1.0144);-webkit-text-stroke:0.4px currentColor;">Moneda</span>
<span class="t" style="left:821.3px;top:104.80px;font-size:8.5px;color:#d0d0d0;font-weight:400;font-family:'Liberation Sans',sans-serif;transform:scaleX(1.0561);">0</span>
<span class="t" style="left:814px;top:112.90px;font-size:8.5px;color:#d0d0d0;font-weight:400;font-family:'Liberation Sans',sans-serif;transform:scaleX(1.0145);">.00</span>
<span class="t" style="left:840.5px;top:104.80px;font-size:8.5px;color:#d0d0d0;font-weight:400;font-family:'Liberation Sans',sans-serif;transform:scaleX(1.0145);">.00</span>
<span class="t" style="left:846.8px;top:112.90px;font-size:8.5px;color:#d0d0d0;font-weight:400;font-family:'Liberation Sans',sans-serif;transform:scaleX(1.0561);">0</span>
<span class="t" style="left:888px;top:104.49px;font-size:11px;color:#e6e6e6;font-weight:400;font-family:'Liberation Sans',sans-serif;transform:scaleX(1.0056);-webkit-text-stroke:0.4px currentColor;">Formato</span>
<span class="t" style="left:880.1px;top:116.39px;font-size:11px;color:#e6e6e6;font-weight:400;font-family:'Liberation Sans',sans-serif;transform:scaleX(1.0536);-webkit-text-stroke:0.4px currentColor;">condicional</span>
<span class="t" style="left:9.6px;top:141.42px;font-size:12.5px;color:#e2e2e2;font-weight:400;font-family:'Liberation Sans',sans-serif;transform:scaleX(0.8911);-webkit-text-stroke:0.4px currentColor;">F15</span>
<span class="t" style="left:157.5px;top:141.30px;font-size:15px;color:#8a8a8a;font-weight:400;font-family:'Liberation Serif',serif;transform:scaleX(1.3391);font-style:italic;">fx</span>
<span class="t" style="left:187px;top:142.40px;font-size:13px;color:#f0f0f0;font-weight:400;font-family:'Liberation Sans',sans-serif;transform:scaleX(0.9898);-webkit-text-stroke:0.3px #f0f0f0;">=TotalMonthlyIncome-TotalMonthlyExpenses-TotalMonthlySavings</span>
<span class="t" style="left:31.5px;top:169.73px;font-size:10px;color:#f0f0f0;font-weight:400;font-family:'Liberation Sans',sans-serif;width:7px;text-align:center;">A</span>
<span class="t" style="left:116.0px;top:169.73px;font-size:10px;color:#f0f0f0;font-weight:400;font-family:'Liberation Sans',sans-serif;width:7px;text-align:center;">B</span>
<span class="t" style="left:234.5px;top:169.73px;font-size:10px;color:#f0f0f0;font-weight:400;font-family:'Liberation Sans',sans-serif;width:7px;text-align:center;">C</span>
<span class="t" style="left:301.5px;top:169.73px;font-size:10px;color:#f0f0f0;font-weight:400;font-family:'Liberation Sans',sans-serif;width:7px;text-align:center;">D</span>
<span class="t" style="left:380.0px;top:169.73px;font-size:10px;color:#f0f0f0;font-weight:400;font-family:'Liberation Sans',sans-serif;width:7px;text-align:center;">E</span>
<span class="t" style="left:485.5px;top:169.73px;font-size:10px;color:#f0f0f0;font-weight:400;font-family:'Liberation Sans',sans-serif;width:7px;text-align:center;">F</span>
<span class="t" style="left:579.5px;top:169.73px;font-size:10px;color:#f0f0f0;font-weight:400;font-family:'Liberation Sans',sans-serif;width:7px;text-align:center;">G</span>
<span class="t" style="left:646.0px;top:169.73px;font-size:10px;color:#f0f0f0;font-weight:400;font-family:'Liberation Sans',sans-serif;width:7px;text-align:center;">H</span>
<span class="t" style="left:712.5px;top:169.73px;font-size:10px;color:#f0f0f0;font-weight:400;font-family:'Liberation Sans',sans-serif;width:7px;text-align:center;">I</span>
<span class="t" style="left:806.5px;top:169.73px;font-size:10px;color:#f0f0f0;font-weight:400;font-family:'Liberation Sans',sans-serif;width:7px;text-align:center;">J</span>
<span class="t" style="left:867.0px;top:169.73px;font-size:10px;color:#f0f0f0;font-weight:400;font-family:'Liberation Sans',sans-serif;width:7px;text-align:center;">K</span>
<span class="t" style="left:908.0px;top:169.73px;font-size:10px;color:#f0f0f0;font-weight:400;font-family:'Liberation Sans',sans-serif;width:7px;text-align:center;">L</span>
<span class="t" style="left:0px;top:219.53px;font-size:10px;color:#f0f0f0;font-weight:400;font-family:'Liberation Sans',sans-serif;width:21px;text-align:center;">2</span>
<span class="t" style="left:0px;top:252.53px;font-size:10px;color:#f0f0f0;font-weight:400;font-family:'Liberation Sans',sans-serif;width:21px;text-align:center;">3</span>
<span class="t" style="left:0px;top:270.54px;font-size:10px;color:#f0f0f0;font-weight:400;font-family:'Liberation Sans',sans-serif;width:21px;text-align:center;">4</span>
<span class="t" style="left:0px;top:320.04px;font-size:10px;color:#f0f0f0;font-weight:400;font-family:'Liberation Sans',sans-serif;width:21px;text-align:center;">6</span>
<span class="t" style="left:0px;top:337.54px;font-size:10px;color:#f0f0f0;font-weight:400;font-family:'Liberation Sans',sans-serif;width:21px;text-align:center;">7</span>
<span class="t" style="left:0px;top:386.54px;font-size:10px;color:#f0f0f0;font-weight:400;font-family:'Liberation Sans',sans-serif;width:21px;text-align:center;">9</span>
<span class="t" style="left:0px;top:404.54px;font-size:10px;color:#f0f0f0;font-weight:400;font-family:'Liberation Sans',sans-serif;width:21px;text-align:center;">10</span>
<span class="t" style="left:0px;top:453.54px;font-size:10px;color:#f0f0f0;font-weight:400;font-family:'Liberation Sans',sans-serif;width:21px;text-align:center;">12</span>
<span class="t" style="left:0px;top:471.54px;font-size:10px;color:#f0f0f0;font-weight:400;font-family:'Liberation Sans',sans-serif;width:21px;text-align:center;">13</span>
<span class="t" style="left:0px;top:520.53px;font-size:10px;color:#f0f0f0;font-weight:400;font-family:'Liberation Sans',sans-serif;width:21px;text-align:center;">15</span>
<span class="t" style="left:0px;top:551.53px;font-size:10px;color:#f0f0f0;font-weight:400;font-family:'Liberation Sans',sans-serif;width:21px;text-align:center;">16</span>
<span class="t" style="left:0px;top:590.53px;font-size:10px;color:#f0f0f0;font-weight:400;font-family:'Liberation Sans',sans-serif;width:21px;text-align:center;">17</span>
<span class="t" style="left:0px;top:618.53px;font-size:10px;color:#f0f0f0;font-weight:400;font-family:'Liberation Sans',sans-serif;width:21px;text-align:center;">18</span>
<span class="t" style="left:0px;top:646.53px;font-size:10px;color:#f0f0f0;font-weight:400;font-family:'Liberation Sans',sans-serif;width:21px;text-align:center;">19</span>
<span class="t" style="left:0px;top:674.53px;font-size:10px;color:#f0f0f0;font-weight:400;font-family:'Liberation Sans',sans-serif;width:21px;text-align:center;">20</span>
<span class="t" style="left:0px;top:702.53px;font-size:10px;color:#f0f0f0;font-weight:400;font-family:'Liberation Sans',sans-serif;width:21px;text-align:center;">21</span>
<span class="t" style="left:0px;top:730.53px;font-size:10px;color:#f0f0f0;font-weight:400;font-family:'Liberation Sans',sans-serif;width:21px;text-align:center;">22</span>
<span class="t" style="left:0px;top:758.53px;font-size:10px;color:#f0f0f0;font-weight:400;font-family:'Liberation Sans',sans-serif;width:21px;text-align:center;">23</span>
<span class="t" style="left:0px;top:786.53px;font-size:10px;color:#f0f0f0;font-weight:400;font-family:'Liberation Sans',sans-serif;width:21px;text-align:center;">24</span>
<span class="t" style="left:0px;top:814.53px;font-size:10px;color:#f0f0f0;font-weight:400;font-family:'Liberation Sans',sans-serif;width:21px;text-align:center;">25</span>
<span class="t" style="left:0px;top:842.53px;font-size:10px;color:#f0f0f0;font-weight:400;font-family:'Liberation Sans',sans-serif;width:21px;text-align:center;">26</span>
<span class="t" style="left:0px;top:870.53px;font-size:10px;color:#f0f0f0;font-weight:400;font-family:'Liberation Sans',sans-serif;width:21px;text-align:center;">27</span>
<span class="t" style="left:0px;top:898.53px;font-size:10px;color:#f0f0f0;font-weight:400;font-family:'Liberation Sans',sans-serif;width:21px;text-align:center;">28</span>
<span class="t" style="left:0px;top:926.53px;font-size:10px;color:#f0f0f0;font-weight:400;font-family:'Liberation Sans',sans-serif;width:21px;text-align:center;">29</span>
<span class="t" style="left:52.2px;top:200.40px;font-size:21.5px;color:#ffffff;font-weight:400;font-family:'Liberation Sans',sans-serif;transform:scaleX(0.9055);-webkit-text-stroke:0.45px #fff;">Presupuesto personal</span>
<span class="t" style="left:51.3px;top:248.57px;font-size:13.5px;color:#5b5b5b;font-weight:400;font-family:'Liberation Sans',sans-serif;transform:scaleX(0.9403);">Porcentaje de ingresos gastados</span>
<span class="t" style="left:445.4px;top:249.20px;font-size:13px;color:#5b5b5b;font-weight:400;font-family:'Liberation Sans',sans-serif;transform:scaleX(0.9418);">Resumen</span>
<span class="t" style="left:445.4px;top:269.91px;font-size:10.5px;color:#0f86f5;font-weight:400;font-family:'Liberation Sans',sans-serif;transform:scaleX(0.8870);-webkit-text-stroke:0.35px #0f86f5;">TOTAL INGRESOS MENSUALES</span>
<span class="t" style="left:448px;top:287.76px;font-size:25.8px;color:#5f5f5f;font-weight:400;font-family:'Liberation Sans',sans-serif;transform:scaleX(0.8976);">$15,000</span>
<span class="t" style="left:445.4px;top:336.61px;font-size:10.5px;color:#0f86f5;font-weight:400;font-family:'Liberation Sans',sans-serif;transform:scaleX(0.8878);-webkit-text-stroke:0.35px #0f86f5;">TOTAL GASTOS MENSUALES</span>
<span class="t" style="left:448px;top:355.16px;font-size:25.8px;color:#5f5f5f;font-weight:400;font-family:'Liberation Sans',sans-serif;transform:scaleX(0.8976);">$14,450</span>
<span class="t" style="left:445.4px;top:404.01px;font-size:10.5px;color:#0f86f5;font-weight:400;font-family:'Liberation Sans',sans-serif;transform:scaleX(0.8811);-webkit-text-stroke:0.35px #0f86f5;">TOTAL AHORROS MENSUALES</span>
<span class="t" style="left:448px;top:422.76px;font-size:25.8px;color:#5f5f5f;font-weight:400;font-family:'Liberation Sans',sans-serif;transform:scaleX(0.8834);">$550</span>
<span class="t" style="left:445.4px;top:470.51px;font-size:10.5px;color:#0f86f5;font-weight:400;font-family:'Liberation Sans',sans-serif;transform:scaleX(0.8836);-webkit-text-stroke:0.35px #0f86f5;">SALDO DE EFECTIVO</span>
<span class="t" style="left:448px;top:489.46px;font-size:25.8px;color:#5f5f5f;font-weight:400;font-family:'Liberation Sans',sans-serif;transform:scaleX(0.8501);">$0</span>
<span class="t" style="left:665.2px;top:277.34px;font-size:10px;color:#595959;font-weight:400;font-family:'Liberation Sans',sans-serif;transform:scaleX(0.9957);">$15,100</span>
<span class="t" style="left:665.2px;top:297.40px;font-size:10px;color:#595959;font-weight:400;font-family:'Liberation Sans',sans-serif;transform:scaleX(0.9957);">$15,000</span>
<span class="t" style="left:665.2px;top:317.46px;font-size:10px;color:#595959;font-weight:400;font-family:'Liberation Sans',sans-serif;transform:scaleX(0.9957);">$14,900</span>
<span class="t" style="left:665.2px;top:337.52px;font-size:10px;color:#595959;font-weight:400;font-family:'Liberation Sans',sans-serif;transform:scaleX(0.9957);">$14,800</span>
<span class="t" style="left:665.2px;top:357.58px;font-size:10px;color:#595959;font-weight:400;font-family:'Liberation Sans',sans-serif;transform:scaleX(0.9957);">$14,700</span>
<span class="t" style="left:665.2px;top:377.64px;font-size:10px;color:#595959;font-weight:400;font-family:'Liberation Sans',sans-serif;transform:scaleX(0.9957);">$14,600</span>
<span class="t" style="left:665.2px;top:397.70px;font-size:10px;color:#595959;font-weight:400;font-family:'Liberation Sans',sans-serif;transform:scaleX(0.9957);">$14,500</span>
<span class="t" style="left:665.2px;top:417.75px;font-size:10px;color:#595959;font-weight:400;font-family:'Liberation Sans',sans-serif;transform:scaleX(0.9957);">$14,400</span>
<span class="t" style="left:665.2px;top:437.82px;font-size:10px;color:#595959;font-weight:400;font-family:'Liberation Sans',sans-serif;transform:scaleX(0.9957);">$14,300</span>
<span class="t" style="left:665.2px;top:457.88px;font-size:10px;color:#595959;font-weight:400;font-family:'Liberation Sans',sans-serif;transform:scaleX(0.9957);">$14,200</span>
<span class="t" style="left:665.2px;top:477.94px;font-size:10px;color:#595959;font-weight:400;font-family:'Liberation Sans',sans-serif;transform:scaleX(0.9957);">$14,100</span>
<span class="t" style="left:729.4px;top:501.91px;font-size:10.5px;color:#646464;font-weight:400;font-family:'Liberation Sans',sans-serif;transform:scaleX(0.9483);">Ingresos</span>
<span class="t" style="left:803px;top:501.91px;font-size:10.5px;color:#646464;font-weight:400;font-family:'Liberation Sans',sans-serif;transform:scaleX(0.9740);">Gastos</span>
<span class="t" style="left:51.1px;top:547.92px;font-size:12.5px;color:#5b5b5b;font-weight:400;font-family:'Liberation Sans',sans-serif;transform:scaleX(1.0235);">Ingresos mensuales</span>
<span class="t" style="left:51.1px;top:576.91px;font-size:10.5px;color:#0f86f5;font-weight:400;font-family:'Liberation Sans',sans-serif;transform:scaleX(0.8827);-webkit-text-stroke:0.35px #0f86f5;">ARTÍCULO</span>
<span class="t" style="left:193.8px;top:576.91px;font-size:10.5px;color:#0f86f5;font-weight:400;font-family:'Liberation Sans',sans-serif;transform:scaleX(0.9111);-webkit-text-stroke:0.35px #0f86f5;">CANTIDAD</span>
<span class="t" style="left:51.1px;top:610.11px;font-size:10.5px;color:#626262;font-weight:400;font-family:'Liberation Sans',sans-serif;transform:scaleX(0.9595);">Salarios</span>
<span class="t" style="left:193.8px;top:610.11px;font-size:10.5px;color:#626262;font-weight:400;font-family:'Liberation Sans',sans-serif;transform:scaleX(1.0216);">$10,000.00</span>
<span class="t" style="left:51.1px;top:638.11px;font-size:10.5px;color:#626262;font-weight:400;font-family:'Liberation Sans',sans-serif;transform:scaleX(1.0127);">Ingreso por rentas</span>
<span class="t" style="left:193.8px;top:638.11px;font-size:10.5px;color:#626262;font-weight:400;font-family:'Liberation Sans',sans-serif;transform:scaleX(1.0189);">$3,000.00</span>
<span class="t" style="left:51.1px;top:666.11px;font-size:10.5px;color:#626262;font-weight:400;font-family:'Liberation Sans',sans-serif;">Otros</span>
<span class="t" style="left:193.8px;top:666.11px;font-size:10.5px;color:#626262;font-weight:400;font-family:'Liberation Sans',sans-serif;transform:scaleX(1.0189);">$2,000.00</span>
<span class="t" style="left:327px;top:548.32px;font-size:12.5px;color:#5b5b5b;font-weight:400;font-family:'Liberation Sans',sans-serif;">Gastos mensuales</span>
<span class="t" style="left:327px;top:577.21px;font-size:10.5px;color:#0f86f5;font-weight:400;font-family:'Liberation Sans',sans-serif;transform:scaleX(0.8884);-webkit-text-stroke:0.35px #0f86f5;">ARTÍCULO</span>
<span class="t" style="left:445.1px;top:570.01px;font-size:10.5px;color:#0f86f5;font-weight:400;font-family:'Liberation Sans',sans-serif;transform:scaleX(0.8588);-webkit-text-stroke:0.35px #0f86f5;">FECHA DE</span>
<span class="t" style="left:445.1px;top:582.71px;font-size:10.5px;color:#0f86f5;font-weight:400;font-family:'Liberation Sans',sans-serif;transform:scaleX(0.9198);-webkit-text-stroke:0.35px #0f86f5;">VENCIMIENTO</span>
<span class="t" style="left:538.8px;top:577.21px;font-size:10.5px;color:#0f86f5;font-weight:400;font-family:'Liberation Sans',sans-serif;transform:scaleX(0.9148);-webkit-text-stroke:0.35px #0f86f5;">CANTIDAD</span>
<span class="t" style="left:327.4px;top:610.11px;font-size:10.5px;color:#626262;font-weight:400;font-family:'Liberation Sans',sans-serif;transform:scaleX(1.0561);">Alquiler/hipoteca</span>
<span class="t" style="left:445.3px;top:610.11px;font-size:10.5px;color:#626262;font-weight:400;font-family:'Liberation Sans',sans-serif;transform:scaleX(1.0407);">05/05/2023</span>
<span class="t" style="left:538.8px;top:610.11px;font-size:10.5px;color:#626262;font-weight:400;font-family:'Liberation Sans',sans-serif;transform:scaleX(1.0103);">$5,000.00</span>
<span class="t" style="left:327.4px;top:638.11px;font-size:10.5px;color:#626262;font-weight:400;font-family:'Liberation Sans',sans-serif;transform:scaleX(0.9754);">Energía Eléctrica</span>
<span class="t" style="left:445.3px;top:638.11px;font-size:10.5px;color:#626262;font-weight:400;font-family:'Liberation Sans',sans-serif;transform:scaleX(1.0476);">[Fecha]</span>
<span class="t" style="left:538.8px;top:638.11px;font-size:10.5px;color:#626262;font-weight:400;font-family:'Liberation Sans',sans-serif;transform:scaleX(1.0166);">$500.00</span>
<span class="t" style="left:327.4px;top:666.11px;font-size:10.5px;color:#626262;font-weight:400;font-family:'Liberation Sans',sans-serif;transform:scaleX(1.0301);">Gasolina</span>
<span class="t" style="left:445.3px;top:666.11px;font-size:10.5px;color:#626262;font-weight:400;font-family:'Liberation Sans',sans-serif;transform:scaleX(1.0476);">[Fecha]</span>
<span class="t" style="left:538.8px;top:666.11px;font-size:10.5px;color:#626262;font-weight:400;font-family:'Liberation Sans',sans-serif;transform:scaleX(1.0103);">$1,000.00</span>
<span class="t" style="left:327.4px;top:694.11px;font-size:10.5px;color:#626262;font-weight:400;font-family:'Liberation Sans',sans-serif;transform:scaleX(1.0369);">Teléfono móvil</span>
<span class="t" style="left:445.3px;top:694.11px;font-size:10.5px;color:#626262;font-weight:400;font-family:'Liberation Sans',sans-serif;transform:scaleX(1.0476);">[Fecha]</span>
<span class="t" style="left:538.8px;top:694.11px;font-size:10.5px;color:#626262;font-weight:400;font-family:'Liberation Sans',sans-serif;transform:scaleX(1.0166);">$300.00</span>
<span class="t" style="left:327.4px;top:722.11px;font-size:10.5px;color:#626262;font-weight:400;font-family:'Liberation Sans',sans-serif;transform:scaleX(1.0777);">Comida</span>
<span class="t" style="left:445.3px;top:722.11px;font-size:10.5px;color:#626262;font-weight:400;font-family:'Liberation Sans',sans-serif;transform:scaleX(1.0476);">[Fecha]</span>
<span class="t" style="left:538.8px;top:722.11px;font-size:10.5px;color:#626262;font-weight:400;font-family:'Liberation Sans',sans-serif;transform:scaleX(1.0166);">$500.00</span>
<span class="t" style="left:327.4px;top:750.11px;font-size:10.5px;color:#626262;font-weight:400;font-family:'Liberation Sans',sans-serif;transform:scaleX(1.0962);">Pago de coche</span>
<span class="t" style="left:445.3px;top:750.11px;font-size:10.5px;color:#626262;font-weight:400;font-family:'Liberation Sans',sans-serif;transform:scaleX(1.0476);">[Fecha]</span>
<span class="t" style="left:538.8px;top:750.11px;font-size:10.5px;color:#626262;font-weight:400;font-family:'Liberation Sans',sans-serif;transform:scaleX(1.0103);">$4,000.00</span>
<span class="t" style="left:327.4px;top:778.11px;font-size:10.5px;color:#626262;font-weight:400;font-family:'Liberation Sans',sans-serif;transform:scaleX(1.0610);">Gastos de coche</span>
<span class="t" style="left:445.3px;top:778.11px;font-size:10.5px;color:#626262;font-weight:400;font-family:'Liberation Sans',sans-serif;transform:scaleX(1.0476);">[Fecha]</span>
<span class="t" style="left:538.8px;top:778.11px;font-size:10.5px;color:#626262;font-weight:400;font-family:'Liberation Sans',sans-serif;transform:scaleX(1.0166);">$500.00</span>
<span class="t" style="left:327.4px;top:806.11px;font-size:10.5px;color:#626262;font-weight:400;font-family:'Liberation Sans',sans-serif;transform:scaleX(0.9644);">Préstamos</span>
<span class="t" style="left:445.3px;top:806.11px;font-size:10.5px;color:#626262;font-weight:400;font-family:'Liberation Sans',sans-serif;transform:scaleX(1.0476);">[Fecha]</span>
<span class="t" style="left:538.8px;top:806.11px;font-size:10.5px;color:#626262;font-weight:400;font-family:'Liberation Sans',sans-serif;transform:scaleX(1.0166);">$500.00</span>
<span class="t" style="left:327.4px;top:834.11px;font-size:10.5px;color:#626262;font-weight:400;font-family:'Liberation Sans',sans-serif;transform:scaleX(1.0257);">Tarjetas de crédito</span>
<span class="t" style="left:445.3px;top:834.11px;font-size:10.5px;color:#626262;font-weight:400;font-family:'Liberation Sans',sans-serif;transform:scaleX(1.0476);">[Fecha]</span>
<span class="t" style="left:538.8px;top:834.11px;font-size:10.5px;color:#626262;font-weight:400;font-family:'Liberation Sans',sans-serif;transform:scaleX(1.0103);">$1,000.00</span>
<span class="t" style="left:327.4px;top:862.11px;font-size:10.5px;color:#626262;font-weight:400;font-family:'Liberation Sans',sans-serif;transform:scaleX(1.0473);">Seguro del coche</span>
<span class="t" style="left:445.3px;top:862.11px;font-size:10.5px;color:#626262;font-weight:400;font-family:'Liberation Sans',sans-serif;transform:scaleX(1.0476);">[Fecha]</span>
<span class="t" style="left:538.8px;top:862.11px;font-size:10.5px;color:#626262;font-weight:400;font-family:'Liberation Sans',sans-serif;transform:scaleX(1.0166);">$350.00</span>
<span class="t" style="left:327.4px;top:890.11px;font-size:10.5px;color:#626262;font-weight:400;font-family:'Liberation Sans',sans-serif;transform:scaleX(1.0764);">Cuidado personal</span>
<span class="t" style="left:445.3px;top:890.11px;font-size:10.5px;color:#626262;font-weight:400;font-family:'Liberation Sans',sans-serif;transform:scaleX(1.0476);">[Fecha]</span>
<span class="t" style="left:538.8px;top:890.11px;font-size:10.5px;color:#626262;font-weight:400;font-family:'Liberation Sans',sans-serif;transform:scaleX(1.0166);">$500.00</span>
<span class="t" style="left:327.4px;top:918.11px;font-size:10.5px;color:#626262;font-weight:400;font-family:'Liberation Sans',sans-serif;transform:scaleX(0.9708);">Entretenimiento</span>
<span class="t" style="left:445.3px;top:918.11px;font-size:10.5px;color:#626262;font-weight:400;font-family:'Liberation Sans',sans-serif;transform:scaleX(1.0476);">[Fecha]</span>
<span class="t" style="left:538.8px;top:918.11px;font-size:10.5px;color:#626262;font-weight:400;font-family:'Liberation Sans',sans-serif;transform:scaleX(1.0166);">$250.00</span>
<span class="t" style="left:327.4px;top:946.11px;font-size:10.5px;color:#626262;font-weight:400;font-family:'Liberation Sans',sans-serif;transform:scaleX(1.0074);">Varios</span>
<span class="t" style="left:445.3px;top:946.11px;font-size:10.5px;color:#626262;font-weight:400;font-family:'Liberation Sans',sans-serif;transform:scaleX(1.0476);">[Fecha]</span>
<span class="t" style="left:538.8px;top:946.11px;font-size:10.5px;color:#626262;font-weight:400;font-family:'Liberation Sans',sans-serif;transform:scaleX(1.0117);">$50.00</span>
<span class="t" style="left:671.9px;top:548.32px;font-size:12.5px;color:#5b5b5b;font-weight:400;font-family:'Liberation Sans',sans-serif;transform:scaleX(1.0195);">Ahorros mensuales</span>
<span class="t" style="left:671.9px;top:577.01px;font-size:10.5px;color:#0f86f5;font-weight:400;font-family:'Liberation Sans',sans-serif;transform:scaleX(0.8372);-webkit-text-stroke:0.35px #0f86f5;">FECHA</span>
<span class="t" style="left:765.9px;top:577.01px;font-size:10.5px;color:#0f86f5;font-weight:400;font-family:'Liberation Sans',sans-serif;transform:scaleX(0.9074);-webkit-text-stroke:0.35px #0f86f5;">CANTIDAD</span>
<span class="t" style="left:671.9px;top:610.11px;font-size:10.5px;color:#626262;font-weight:400;font-family:'Liberation Sans',sans-serif;transform:scaleX(1.0476);">[Fecha]</span>
<span class="t" style="left:765.9px;top:610.11px;font-size:10.5px;color:#626262;font-weight:400;font-family:'Liberation Sans',sans-serif;transform:scaleX(1.0166);">$200.00</span>
<span class="t" style="left:671.9px;top:638.11px;font-size:10.5px;color:#626262;font-weight:400;font-family:'Liberation Sans',sans-serif;transform:scaleX(1.0476);">[Fecha]</span>
<span class="t" style="left:765.9px;top:638.11px;font-size:10.5px;color:#626262;font-weight:400;font-family:'Liberation Sans',sans-serif;transform:scaleX(1.0166);">$250.00</span>
<span class="t" style="left:671.9px;top:666.11px;font-size:10.5px;color:#626262;font-weight:400;font-family:'Liberation Sans',sans-serif;transform:scaleX(1.0476);">[Fecha]</span>
<span class="t" style="left:765.9px;top:666.11px;font-size:10.5px;color:#626262;font-weight:400;font-family:'Liberation Sans',sans-serif;transform:scaleX(1.0166);">$100.00</span>
<span class="t" style="left:76.9px;top:959.62px;font-size:12.5px;color:#23824a;font-weight:700;font-family:'Liberation Sans',sans-serif;transform:scaleX(0.9778);z-index:5;">Mes actual</span>
</body></html>
